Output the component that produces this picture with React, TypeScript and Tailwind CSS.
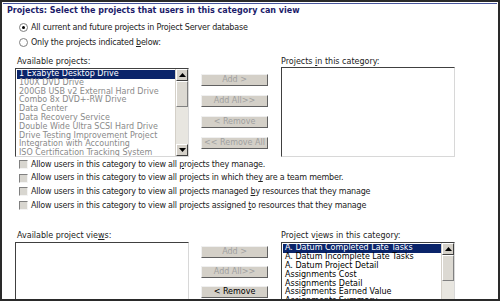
import React from "react";

const avail = [
  "1 Exabyte Desktop Drive",
  "100X DVD Drive",
  "200GB USB v2 External Hard Drive",
  "Combo 8x DVD+-RW Drive",
  "Data Center",
  "Data Recovery Service",
  "Double Wide Ultra SCSI Hard Drive",
  "Drive Testing Improvement Project",
  "Integration with Accounting",
  "ISO Certification Tracking System",
];

const views = [
  "A. Datum Completed Late Tasks",
  "A. Datum Incomplete Late Tasks",
  "A. Datum Project Detail",
  "Assignments Cost",
  "Assignments Detail",
  "Assignments Earned Value",
  "Assignments Summary",
];

function Scrollbar() {
  return (
    <div className="w-[13px] h-full flex flex-col bg-[#e8e6e0] border-l border-[#d4d0c8]">
      <div className="h-[12px] bg-[#d4d0c8] border border-t-white border-l-white border-r-[#404040] border-b-[#404040] flex items-center justify-center">
        <svg width="7" height="4" viewBox="0 0 7 4"><path d="M3.5 0 L7 4 L0 4 Z" fill="#000" /></svg>
      </div>
      <div className="h-[26px] bg-[#dcd9d2] border border-t-white border-l-white border-r-[#808080] border-b-[#808080]" />
      <div className="flex-1" />
      <div className="h-[12px] bg-[#d4d0c8] border border-t-white border-l-white border-r-[#404040] border-b-[#404040] flex items-center justify-center">
        <svg width="7" height="4" viewBox="0 0 7 4"><path d="M0 0 L7 0 L3.5 4 Z" fill="#000" /></svg>
      </div>
    </div>
  );
}

function ListBox({ items, gray, h }: { items: string[]; gray?: boolean; h: number }) {
  return (
    <div
      className="w-[174px] flex border border-t-[#404040] border-l-[#404040] border-r-[#d8d8d8] border-b-[#d8d8d8] bg-white overflow-hidden"
      style={{ height: h }}
    >
      <div className="flex-1 pt-[1px] pl-[1px] overflow-hidden">
        {items.map((t, i) => (
          <div
            key={t}
            className={
              "h-[8.8px] leading-[8.8px] pl-[2px] whitespace-nowrap text-[8px] " +
              (i === 0
                ? "bg-[#0a246a] text-white"
                : gray
                ? "text-[#8a8a8a]"
                : "text-black")
            }
          >
            {t}
          </div>
        ))}
      </div>
      {items.length > 0 && <Scrollbar />}
    </div>
  );
}

function Btn({ label, enabled }: { label: string; enabled?: boolean }) {
  return (
    <div
      className={
        "w-[67px] h-[12px] bg-[#d4d0c8] border border-t-[#f0f0f0] border-l-[#f0f0f0] border-r-[#606060] border-b-[#606060] flex items-center justify-center text-[8px] leading-none " +
        (enabled ? "text-black" : "text-[#a0a0a0]")
      }
    >
      {label}
    </div>
  );
}

function Check({ children }: { children: React.ReactNode }) {
  return (
    <div className="flex items-center h-[13.6px] pl-[17px]">
      <div className="w-[9px] h-[9px] bg-[#d8d6d0] border border-t-[#808080] border-l-[#808080] border-r-[#f4f4f4] border-b-[#f4f4f4] mr-[3px]" />
      <span className="text-[8px] text-[#222] tracking-[-0.2px]">{children}</span>
    </div>
  );
}

export default function App() {
  return (
    <div
      className="w-[500px] h-[301px] overflow-hidden bg-white border-2 border-[#2a2a2a] text-[#222]"
      style={{ fontFamily: "'DejaVu Sans', Verdana, sans-serif" }}
    >
      <div className="mx-[1px] mt-[1px] border-t border-[#46559c] h-[14px] flex items-center pl-[4px]">
        <span className="text-[8px] font-bold text-[#1c1c6a]">
          Projects: Select the projects that users in this category can view
        </span>
      </div>
      <div className="flex items-center h-[15px] pl-[17px] mt-[3px]">
        <div className="w-[9px] h-[9px] rounded-full border border-[#808080] bg-white flex items-center justify-center mr-[3px]">
          <div className="w-[3px] h-[3px] rounded-full bg-black" />
        </div>
        <span className="text-[8px] tracking-[-0.2px]">All current and future projects in Project Server database</span>
      </div>
      <div className="flex items-center h-[15px] pl-[17px]">
        <div className="w-[9px] h-[9px] rounded-full border border-[#808080] bg-white mr-[3px]" />
        <span className="text-[8px] tracking-[-0.2px]">
          Only the projects indicated <u>b</u>elow:
        </span>
      </div>
      <div className="flex pl-[13px] mt-[6px]">
        <div className="flex flex-col">
          <div className="h-[12px] text-[8px] leading-[12px] pl-[2px]">
            Available pro<u>j</u>ects:
          </div>
          <ListBox items={avail} gray h={89} />
        </div>
        <div className="flex flex-col gap-[9px] ml-[12px] mt-[18px]">
          <Btn label="Add >" />
          <Btn label="Add All>>" />
          <Btn label="< Remove" />
          <Btn label="<< Remove All" />
        </div>
        <div className="flex flex-col ml-[13px]">
          <div className="h-[11px] text-[8px] leading-[11px] pl-[0px]">
            Projects <u>i</u>n this category:
          </div>
          <ListBox items={[]} h={90} />
        </div>
      </div>
      <div className="mt-[1px]">
        <Check>Allow users in this category to view all <u>p</u>rojects they manage.</Check>
        <Check>Allow users in this category to view all projects in which the<u>y</u> are a team member.</Check>
        <Check>Allow users in this category to view all projects managed <u>b</u>y resources that they manage</Check>
        <Check>Allow users in this category to view all projects assigned <u>t</u>o resources that they manage</Check>
      </div>
      <div className="flex pl-[13px] mt-[18px]">
        <div className="flex flex-col">
          <div className="h-[12px] text-[8px] leading-[12px] pl-[2px]">
            Available project vie<u>w</u>s:
          </div>
          <ListBox items={[]} h={70} />
        </div>
        <div className="flex flex-col gap-[8px] ml-[12px] mt-[16px]">
          <Btn label="Add >" />
          <Btn label="Add All>>" />
          <Btn label="< Remove" enabled />
        </div>
        <div className="flex flex-col ml-[13px]">
          <div className="h-[12px] text-[8px] leading-[12px]">
            Project v<u>i</u>ews in this category:
          </div>
          <ListBox items={views} h={70} />
        </div>
      </div>
    </div>
  );
}
